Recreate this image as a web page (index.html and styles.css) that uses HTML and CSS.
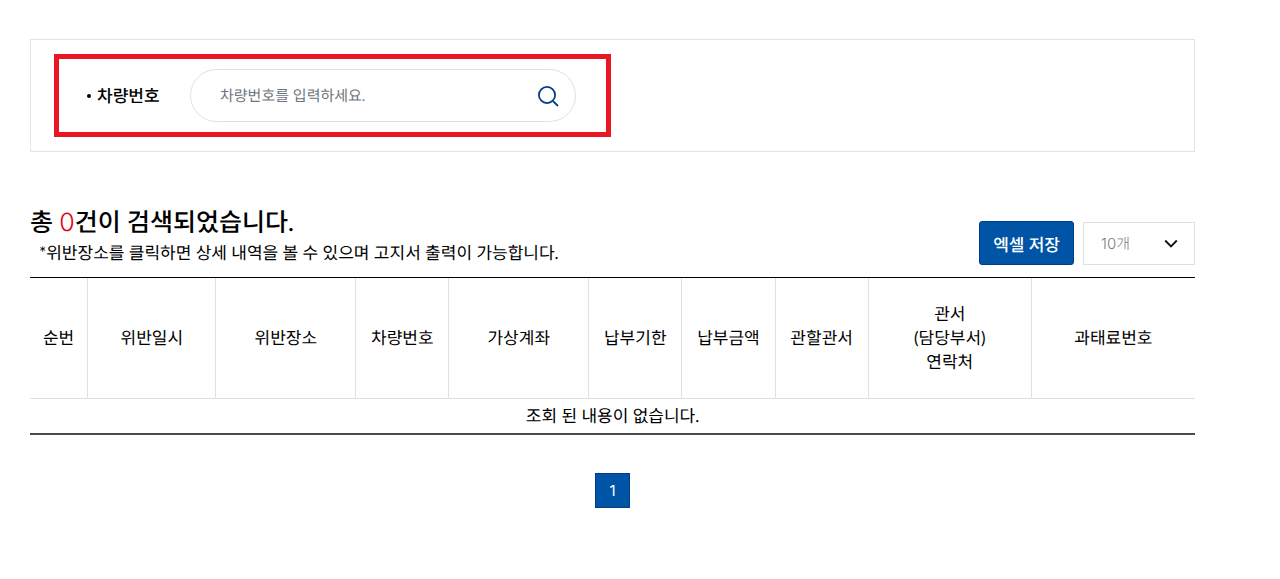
FILE: index.html
```html
<!DOCTYPE html>
<html lang="ko">
<head>
<meta charset="utf-8">
<meta name="viewport" content="width=device-width, initial-scale=1">
<title>차량번호 조회</title>
<link rel="stylesheet" href="styles.css">
</head>
<body>
<main class="page">
  <section class="panel">
    <form class="search">
      <label class="search-label" for="car-no">차량번호</label>
      <div class="search-field">
        <input class="search-input" id="car-no" type="text" placeholder="차량번호를 입력하세요.">
        <button class="search-button" type="button" aria-label="검색">
          <svg width="22" height="22" viewBox="0 0 22 22" fill="none" stroke="#003b87" stroke-width="1.8">
            <circle cx="10" cy="10" r="8.1"/>
            <path d="M15.8 15.8L21 21"/>
          </svg>
        </button>
      </div>
    </form>
  </section>

  <section class="results">
    <div class="results-head">
      <div>
        <h1 class="total">총 <span class="count">0</span>건이 검색되었습니다.</h1>
        <p class="note">*위반장소를 클릭하면 상세 내역을 볼 수 있으며 고지서 출력이 가능합니다.</p>
      </div>
      <div class="tools">
        <button class="excel" type="button">엑셀 저장</button>
        <div class="select-wrap">
          <select class="page-size" aria-label="목록 개수">
            <option>10개</option>
          </select>
          <svg class="chevron" width="14" height="10" viewBox="0 0 14 10" fill="none" stroke="#111" stroke-width="1.8">
            <path d="M1.2 1.5L7 7.4L12.8 1.5"/>
          </svg>
        </div>
      </div>
    </div>
    <table class="list">
      <colgroup>
        <col class="w5"><col class="w11"><col class="w12"><col class="w8"><col class="w12"><col class="w8"><col class="w8"><col class="w8"><col class="w14"><col class="w14">
      </colgroup>
      <thead>
        <tr>
          <th>순번</th><th>위반일시</th><th>위반장소</th><th>차량번호</th><th>가상계좌</th><th>납부기한</th><th>납부금액</th><th>관할관서</th><th>관서<br>(담당부서)<br>연락처</th><th>과태료번호</th>
        </tr>
      </thead>
      <tbody>
        <tr><td colspan="10">조회 된 내용이 없습니다.</td></tr>
      </tbody>
    </table>
    <nav class="pager" aria-label="페이지">
      <a class="pager-link" href="#" aria-current="page">1</a>
    </nav>
  </section>
</main>
</body>
</html>
```
FILE: styles.css
```css
* {
  box-sizing: border-box;
}

body {
  margin: 0;
  background: #fff;
  color: #000;
  font-family: Lato, "Noto Sans CJK KR", sans-serif;
  font-size: 17px;
  line-height: 24px;
  text-rendering: geometricPrecision;
}

button,
input,
select {
  font-family: inherit;
  text-rendering: inherit;
}

.page {
  padding: 39px 85px 40px 30px;
}

.panel {
  padding: 14px 23px;
  border: 1px solid #e4e4e4;
}

.search {
  display: flex;
  align-items: center;
  max-width: 557px;
  padding: 10px 30px 10px 28px;
  border: 5px solid #e81722;
}

.search-label {
  display: flex;
  align-items: center;
  gap: 6px;
  width: 103px;
  font-weight: 500;
}

.search-label::before {
  content: "";
  width: 4px;
  height: 4px;
  border-radius: 50%;
  background: #000;
}

.search-field {
  display: flex;
  flex: 1;
  align-items: center;
  height: 53px;
  padding: 0 16px 0 29px;
  border: 1px solid #e0e0e0;
  border-radius: 27px;
}

.search-input {
  flex: 1;
  min-width: 0;
  padding: 0;
  border: 0;
  outline: 0;
  background: none;
  font-size: 15px;
}

.search-input::placeholder {
  color: #70757d;
  opacity: 1;
}

.search-button {
  display: flex;
  padding: 0;
  border: 0;
  background: none;
}

.results {
  padding-top: 52px;
}

.results-head {
  display: flex;
  justify-content: space-between;
  align-items: flex-end;
  padding-bottom: 12px;
}

.total {
  margin: 0;
  font-size: 25px;
  font-weight: 500;
  line-height: 36px;
}

.count {
  color: #e60012;
  font-family: Inter, sans-serif;
  font-weight: 300;
}

.note {
  margin: 0;
  padding-left: 9px;
}

.tools {
  display: flex;
  align-items: center;
  gap: 9px;
}

.excel {
  height: 44px;
  padding: 0 13px;
  border: 1px solid #003b8c;
  border-radius: 3px;
  background: #0054a6;
  color: #fff;
  font-size: 17px;
  font-weight: 500;
}

.select-wrap {
  position: relative;
}

.page-size {
  display: block;
  width: 112px;
  height: 43px;
  padding: 0 17px;
  border: 1px solid #e0e0e0;
  border-radius: 0;
  appearance: none;
  background: #fff;
  color: #777b82;
  font-family: Inter, "Noto Sans CJK KR", sans-serif;
  font-size: 15px;
  font-weight: 300;
}

.chevron {
  position: absolute;
  top: 17px;
  right: 17px;
  pointer-events: none;
}

.list {
  width: 100%;
  border-top: 1px solid #000;
  border-bottom: 2px solid #4a4a4a;
  border-spacing: 0;
  table-layout: fixed;
}

.w5 { width: 5%; }
.w8 { width: 8%; }
.w11 { width: 11%; }
.w12 { width: 12%; }
.w14 { width: 14%; }

.list th {
  height: 121px;
  padding: 0;
  border-right: 1px solid #e0e0e0;
  border-bottom: 1px solid #e0e0e0;
  font-weight: 400;
}

.list th:last-child {
  border-right: 0;
}

.list td {
  height: 34px;
  padding: 0;
  text-align: center;
}

.pager {
  display: flex;
  justify-content: center;
  padding-top: 38px;
}

.pager-link {
  width: 35px;
  border: 1px solid #003b8c;
  background: #0054a6;
  color: #fff;
  font-family: Inter, sans-serif;
  font-size: 15px;
  line-height: 33px;
  text-align: center;
  text-decoration: none;
}
```
